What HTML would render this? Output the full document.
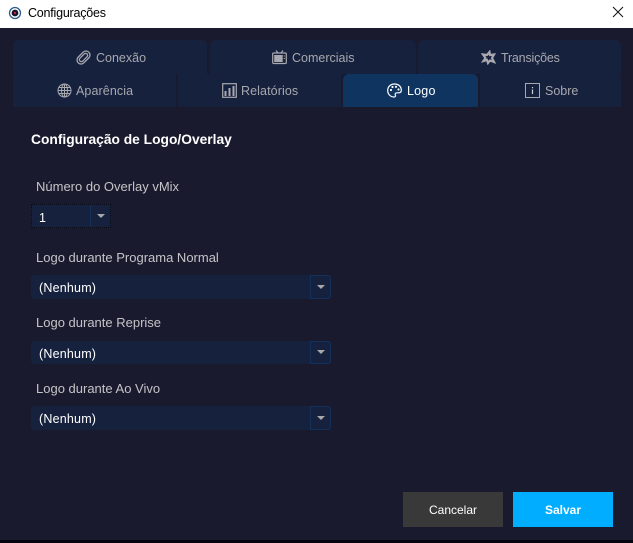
<!DOCTYPE html>
<html lang="pt"><head><meta charset="utf-8"><title>Configurações</title>
<style>
html,body{margin:0;padding:0;width:633px;height:543px;overflow:hidden;background:#1a1a2e}
body{position:relative;font-family:"Liberation Sans",sans-serif}
.a{position:absolute}
.t{position:absolute;white-space:nowrap;line-height:16px;font-size:12.5px}
.tab{position:absolute;background:#16213e;border-radius:6px 6px 0 0}
.tl{color:#a8a8ae}
.lbl{color:#c4c4c8;font-size:13px}
.sel{position:absolute;background:#16213e;border-radius:3px;left:31px;width:300px}
.btn{position:absolute;top:0;bottom:0;right:0;width:21px;border:1px solid #12305a;border-radius:0 3px 3px 0;box-sizing:border-box}
.arr{position:absolute;width:0;height:0;border-left:4px solid transparent;border-right:4px solid transparent;border-top:4px solid #a8a8ac}
svg{position:absolute;fill:none}
</style></head><body>
<div class="a" style="left:0;top:0;width:633px;height:28px;background:#fff"></div>
<svg style="left:8px;top:6px" width="14" height="14" viewBox="0 0 14 14"><circle cx="7" cy="7" r="5.5" stroke="#2c5c8c" stroke-width="1.3"/><circle cx="7" cy="7" r="3.4" fill="#14142c"/><circle cx="7" cy="7" r="1.2" fill="#c02040"/></svg>
<div class="t" style="left:28px;top:5px;color:#000;letter-spacing:-.22px">Configurações</div>
<svg style="left:612px;top:6px" width="12" height="12" viewBox="0 0 12 12"><path d="M1 1L11 11M11 1L1 11" stroke="#111" stroke-width="1"/></svg>

<div class="tab" style="left:13px;top:40px;width:194px;height:34px"></div>
<div class="tab" style="left:210px;top:40px;width:206px;height:34px"></div>
<div class="tab" style="left:418px;top:40px;width:203px;height:34px"></div>
<div class="tab" style="left:13px;top:74px;width:163px;height:33px;border-radius:4px 0 0 0"></div>
<div class="tab" style="left:178px;top:74px;width:163px;height:33px;border-radius:0"></div>
<div class="tab" style="left:343px;top:74px;width:135px;height:33px;background:#0f3460"></div>
<div class="tab" style="left:480px;top:74px;width:141px;height:33px;border-radius:0 4px 0 0"></div>

<svg style="left:76px;top:50px" width="15" height="15" viewBox="0 0 15 15" stroke="#a8a8ae" stroke-width="1.3"><g transform="rotate(-45 7.5 7.5)"><rect x="0" y="3.500" width="15" height="8" rx="4"/><rect x="2.500" y="5.500" width="10" height="4" rx="2"/></g></svg>
<div class="t tl" style="left:96px;top:50px">Conexão</div>
<svg style="left:272px;top:50px" width="15" height="15" viewBox="0 0 15 15" stroke="#a8a8ae" stroke-width="1.2"><path d="M4 0.500L6 3M11 0.500L9 3"/><rect x="0.700" y="3" width="13.600" height="10.500" rx="1"/><rect x="2.200" y="5" width="8.500" height="7" fill="#a8a8ae" stroke="none"/><path d="M12.300 5.500v1M12.300 8v1"/></svg>
<div class="t tl" style="left:292px;top:50px">Comerciais</div>
<svg style="left:481px;top:50px" width="15" height="15" viewBox="0 0 15 15" stroke="#a8a8ae" stroke-width="2.200"><path d="M8.500 2L9 5L13 4.500L11 8L13 12L9 10.500L7 13L6 10L2.500 11L4.500 8L2 4.500L6 5Z"/></svg>
<div class="t tl" style="left:501px;top:50px;letter-spacing:-.2px">Transições</div>

<svg style="left:57px;top:83px" width="15" height="15" viewBox="0 0 15 15" stroke="#a8a8ae" stroke-width="1"><circle cx="7.500" cy="7.500" r="6.500"/><ellipse cx="7.500" cy="7.500" rx="3" ry="6.500"/><path d="M1 7.500H14M2 4.500H13M2 10.500H13M7.500 1V14"/></svg>
<div class="t tl" style="left:76px;top:83px;letter-spacing:.1px">Aparência</div>
<svg style="left:222px;top:83px" width="15" height="15" viewBox="0 0 15 15"><rect x="0.700" y="0.700" width="13.600" height="13.600" stroke="#a8a8ae" stroke-width="1.200"/><path d="M3.500 13V8M7.500 13V5M11.500 13V3" stroke="#a8a8ae" stroke-width="2"/></svg>
<div class="t tl" style="left:241px;top:83px;letter-spacing:.1px">Relatórios</div>
<svg style="left:387px;top:83px" width="15" height="15" viewBox="0 0 15 15" stroke="#fff" stroke-width="1.200"><path d="M7.500 1C3.500 1 0.700 3.800 0.700 7.500S3.500 14 7 14c1.500 0 1.800-1 1.300-2-.5-1.200.2-2.200 1.500-2.200H12c1.500 0 2.300-1 2.300-2.500C14.300 3.500 11.500 1 7.500 1Z"/><circle cx="4" cy="7" r="1.100" fill="#fff" stroke="none"/><circle cx="5.500" cy="4" r="1.100" fill="#fff" stroke="none"/><circle cx="9" cy="3.800" r="1.100" fill="#fff" stroke="none"/><circle cx="11.500" cy="6.500" r="1.100" fill="#fff" stroke="none"/></svg>
<div class="t" style="left:407px;top:83px;color:#fff;letter-spacing:.2px">Logo</div>
<svg style="left:525px;top:83px" width="15" height="15" viewBox="0 0 15 15"><rect x="0.500" y="0.500" width="14" height="14" stroke="#a8a8ae"/><path d="M7.500 4V5.200M7.500 6.500V11" stroke="#d0d0d4" stroke-width="1.200"/></svg>
<div class="t tl" style="left:545px;top:83px">Sobre</div>

<div class="t" style="left:31px;top:132px;color:#fff;font-weight:bold;font-size:13.8px">Configuração de Logo/Overlay</div>
<div class="t lbl" style="left:36px;top:179px">Número do Overlay vMix</div>

<div class="a" style="left:31px;top:204px;width:80px;height:24px;background:#16213e;outline:1px dotted #0a0a14;outline-offset:-1px"></div>
<div class="a" style="left:90px;top:205px;width:1px;height:22px;background:#12305a"></div>
<div class="arr" style="left:97px;top:214px"></div>
<div class="t" style="left:39px;top:210px;color:#fff">1</div>

<div class="t lbl" style="left:36px;top:250px">Logo durante Programa Normal</div>
<div class="sel" style="top:275px;height:24px"><div class="btn"></div></div>
<div class="arr" style="left:317px;top:285px"></div>
<div class="t" style="left:39px;top:280px;color:#fff;letter-spacing:.2px">(Nenhum)</div>

<div class="t lbl" style="left:36px;top:315px">Logo durante Reprise</div>
<div class="sel" style="top:341px;height:23px"><div class="btn"></div></div>
<div class="arr" style="left:317px;top:350px"></div>
<div class="t" style="left:39px;top:346px;color:#fff;letter-spacing:.2px">(Nenhum)</div>

<div class="t lbl" style="left:36px;top:381px">Logo durante Ao Vivo</div>
<div class="sel" style="top:406px;height:24px"><div class="btn"></div></div>
<div class="arr" style="left:317px;top:416px"></div>
<div class="t" style="left:39px;top:411px;color:#fff;letter-spacing:.2px">(Nenhum)</div>

<div class="a" style="left:403px;top:492px;width:100px;height:35px;background:#393939;color:#fff;font-size:12px;line-height:36px;text-align:center">Cancelar</div>
<div class="a" style="left:513px;top:492px;width:100px;height:35px;background:#00adff;color:#fff;font-size:12px;font-weight:bold;line-height:36px;text-align:center">Salvar</div>
<div class="a" style="left:0;top:540px;width:633px;height:3px;background:#050510"></div>
</body></html>
